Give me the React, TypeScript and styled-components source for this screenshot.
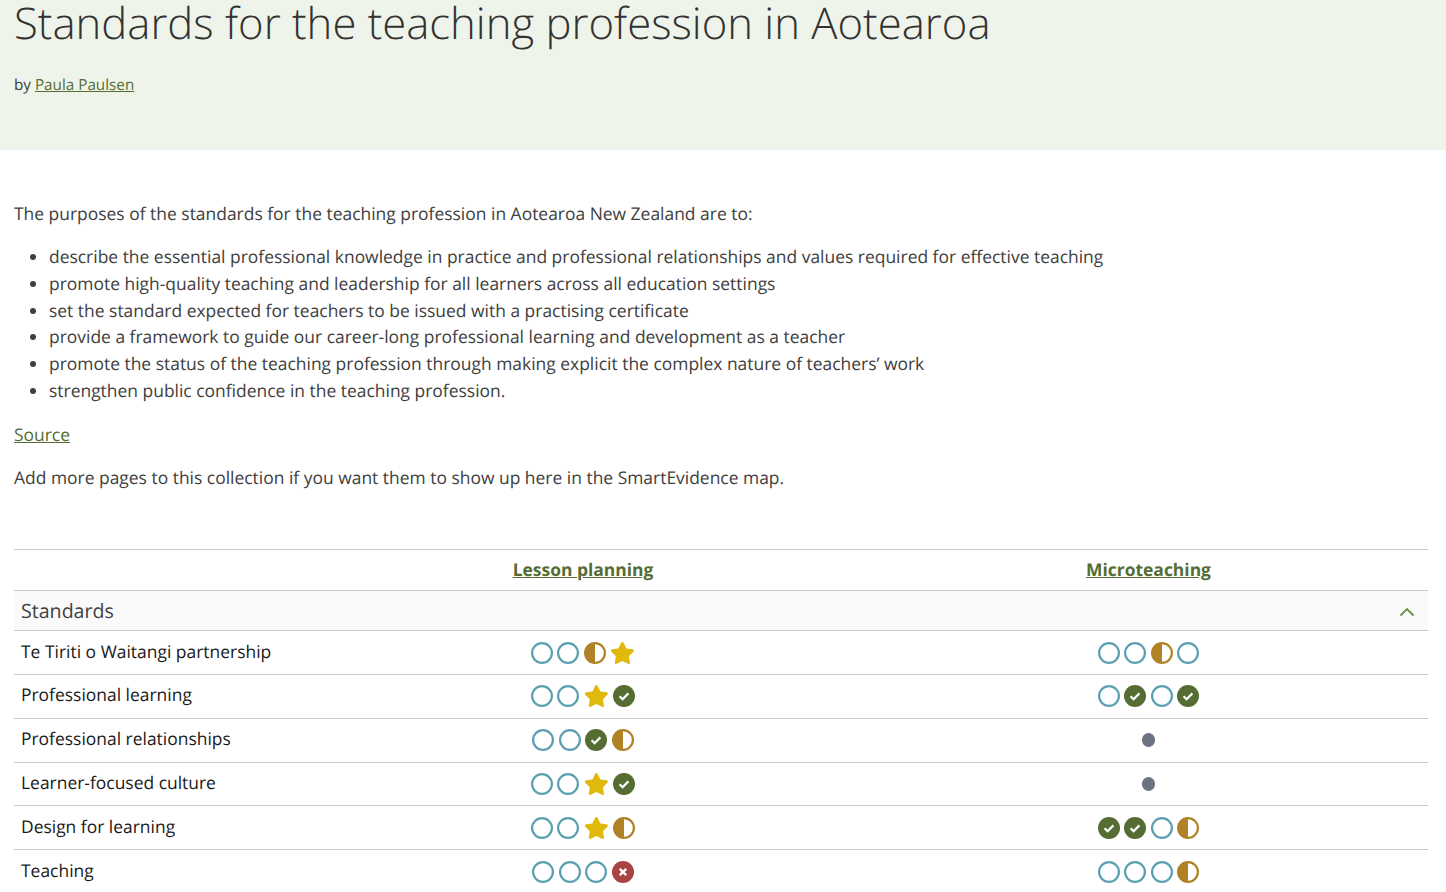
import React from 'react'
import styled, { createGlobalStyle } from 'styled-components'
import { FaStar } from 'react-icons/fa'

const GlobalStyle = createGlobalStyle`
  html, body {
    margin: 0;
    padding: 0;
    background: #fff;
    overflow: hidden;
  }
  body {
    font-family: "Open Sans", "Liberation Sans", sans-serif;
    font-size: 17.45px;
    line-height: 26.8px;
    color: #404040;
    text-rendering: geometricPrecision;
    -webkit-font-smoothing: antialiased;
  }
`;

const Page = styled.div`
  height: 892px;
  overflow: hidden;
`;

const Banner = styled.header`
  height: 150px;
  box-sizing: border-box;
  padding: 0 14px;
  background: #eff4ea;
`;

const Title = styled.h1`
  margin: 0;
  font-size: 43.65px;
  font-weight: 300;
  line-height: 44px;
  color: #333;
`;

const Byline = styled.p`
  margin: 30px 0 0;
  font-size: 15.25px;
  line-height: 22px;
`;

const GreenLink = styled.a`
  color: #556d32;
  text-decoration: underline;
`;

const Content = styled.main`
  padding: 50.7px 18px 0 14px;
`;

const Para = styled.p`
  margin: 0 0 16.6px;
`;

const List = styled.ul`
  margin: 0 0 17.2px;
  padding-left: 35px;
`;

const MapGrid = styled.div`
  display: grid;
  grid-template-columns: 283px 572px 559px;
  margin-top: 56.9px;
  border-top: 1px solid #c8c8c8;
`;

const HeadCell = styled.div`
  height: 40px;
  display: flex;
  align-items: center;
  justify-content: center;
  font-weight: 700;
`;

const GroupRow = styled.div`
  grid-column: 1 / -1;
  height: 40px;
  box-sizing: border-box;
  display: flex;
  align-items: center;
  justify-content: space-between;
  padding: 2px 13px 0 7px;
  font-size: 19.6px;
  background: #fafafa;
  border-top: 1px solid #c8c8c8;
`;

const RowLabel = styled.div`
  height: 43.8px;
  box-sizing: border-box;
  display: flex;
  align-items: center;
  padding: 0 0 1px 7px;
  color: #1a1a1a;
  border-top: 1px solid #c8c8c8;
`;

const RowCell = styled.div`
  height: 43.8px;
  box-sizing: border-box;
  display: flex;
  align-items: center;
  justify-content: center;
  gap: 4.4px;
  border-top: 1px solid #c8c8c8;
`;

const Star = styled(FaStar)`
  width: 24.75px;
  height: 22px;
  color: #e0b90b;
`;

const Dot = styled.span`
  width: 13.5px;
  height: 13.5px;
  border-radius: 50%;
  background: #6b7280;
`;

const Ring = () => (
  <svg width="22" height="22" viewBox="0 0 22 22">
    <circle cx="11" cy="11" r="9.9" fill="none" stroke="#5b9fb1" strokeWidth="2.2" />
  </svg>
)

const Half = () => (
  <svg width="22" height="22" viewBox="0 0 22 22">
    <circle cx="11" cy="11" r="9.9" fill="#fff" stroke="#b08226" strokeWidth="2.2" />
    <path d="M11 1a10 10 0 0 0 0 20z" fill="#b08226" />
  </svg>
)

const Check = () => (
  <svg width="22" height="22" viewBox="0 0 22 22">
    <circle cx="11" cy="11" r="11" fill="#556d32" />
    <path d="M6.6 11.2l3 3 5.8-5.8" fill="none" stroke="#fff" strokeWidth="2.3" />
  </svg>
)

const Cross = () => (
  <svg width="22" height="22" viewBox="0 0 22 22">
    <circle cx="11" cy="11" r="11" fill="#a94442" />
    <path d="M7.8 7.8l6.4 6.4M14.2 7.8l-6.4 6.4" fill="none" stroke="#fff" strokeWidth="2.4" />
  </svg>
)

const Chevron = () => (
  <svg width="16" height="10" viewBox="0 0 16 10">
    <path d="M1.5 8.5L8 2l6.5 6.5" fill="none" stroke="#6f8f45" strokeWidth="1.8" />
  </svg>
)

type Mark = 'ring' | 'half' | 'check' | 'star' | 'cross' | 'dot'

const renderMark = (mark: Mark, i: number) => {
  switch (mark) {
    case 'ring': return <Ring key={i} />
    case 'half': return <Half key={i} />
    case 'check': return <Check key={i} />
    case 'star': return <Star key={i} />
    case 'cross': return <Cross key={i} />
    default: return <Dot key={i} />
  }
}

const purposes = [
  'describe the essential professional knowledge in practice and professional relationships and values required for effective teaching',
  'promote high-quality teaching and leadership for all learners across all education settings',
  'set the standard expected for teachers to be issued with a practising certificate',
  'provide a framework to guide our career-long professional learning and development as a teacher',
  'promote the status of the teaching profession through making explicit the complex nature of teachers’ work',
  'strengthen public confidence in the teaching profession.',
]

const rows: { label: string; lesson: Mark[]; micro: Mark[] }[] = [
  { label: 'Te Tiriti o Waitangi partnership', lesson: ['ring', 'ring', 'half', 'star'], micro: ['ring', 'ring', 'half', 'ring'] },
  { label: 'Professional learning', lesson: ['ring', 'ring', 'star', 'check'], micro: ['ring', 'check', 'ring', 'check'] },
  { label: 'Professional relationships', lesson: ['ring', 'ring', 'check', 'half'], micro: ['dot'] },
  { label: 'Learner-focused culture', lesson: ['ring', 'ring', 'star', 'check'], micro: ['dot'] },
  { label: 'Design for learning', lesson: ['ring', 'ring', 'star', 'half'], micro: ['check', 'check', 'ring', 'half'] },
  { label: 'Teaching', lesson: ['ring', 'ring', 'ring', 'cross'], micro: ['ring', 'ring', 'ring', 'half'] },
]

const App: React.FC = () => {
  return (
    <Page>
      <GlobalStyle />
      <Banner>
        <Title>Standards for the teaching profession in Aotearoa</Title>
        <Byline>by <GreenLink href="#">Paula Paulsen</GreenLink></Byline>
      </Banner>
      <Content>
        <Para>The purposes of the standards for the teaching profession in Aotearoa New Zealand are to:</Para>
        <List>
          {purposes.map((p) => <li key={p}>{p}</li>)}
        </List>
        <Para><GreenLink href="#">Source</GreenLink></Para>
        <Para>Add more pages to this collection if you want them to show up here in the SmartEvidence map.</Para>
        <MapGrid>
          <div />
          <HeadCell><GreenLink href="#">Lesson planning</GreenLink></HeadCell>
          <HeadCell><GreenLink href="#">Microteaching</GreenLink></HeadCell>
          <GroupRow>Standards<Chevron /></GroupRow>
          {rows.map((row) => (
            <React.Fragment key={row.label}>
              <RowLabel>{row.label}</RowLabel>
              <RowCell>{row.lesson.map(renderMark)}</RowCell>
              <RowCell>{row.micro.map(renderMark)}</RowCell>
            </React.Fragment>
          ))}
        </MapGrid>
      </Content>
    </Page>
  )
}

export default App
